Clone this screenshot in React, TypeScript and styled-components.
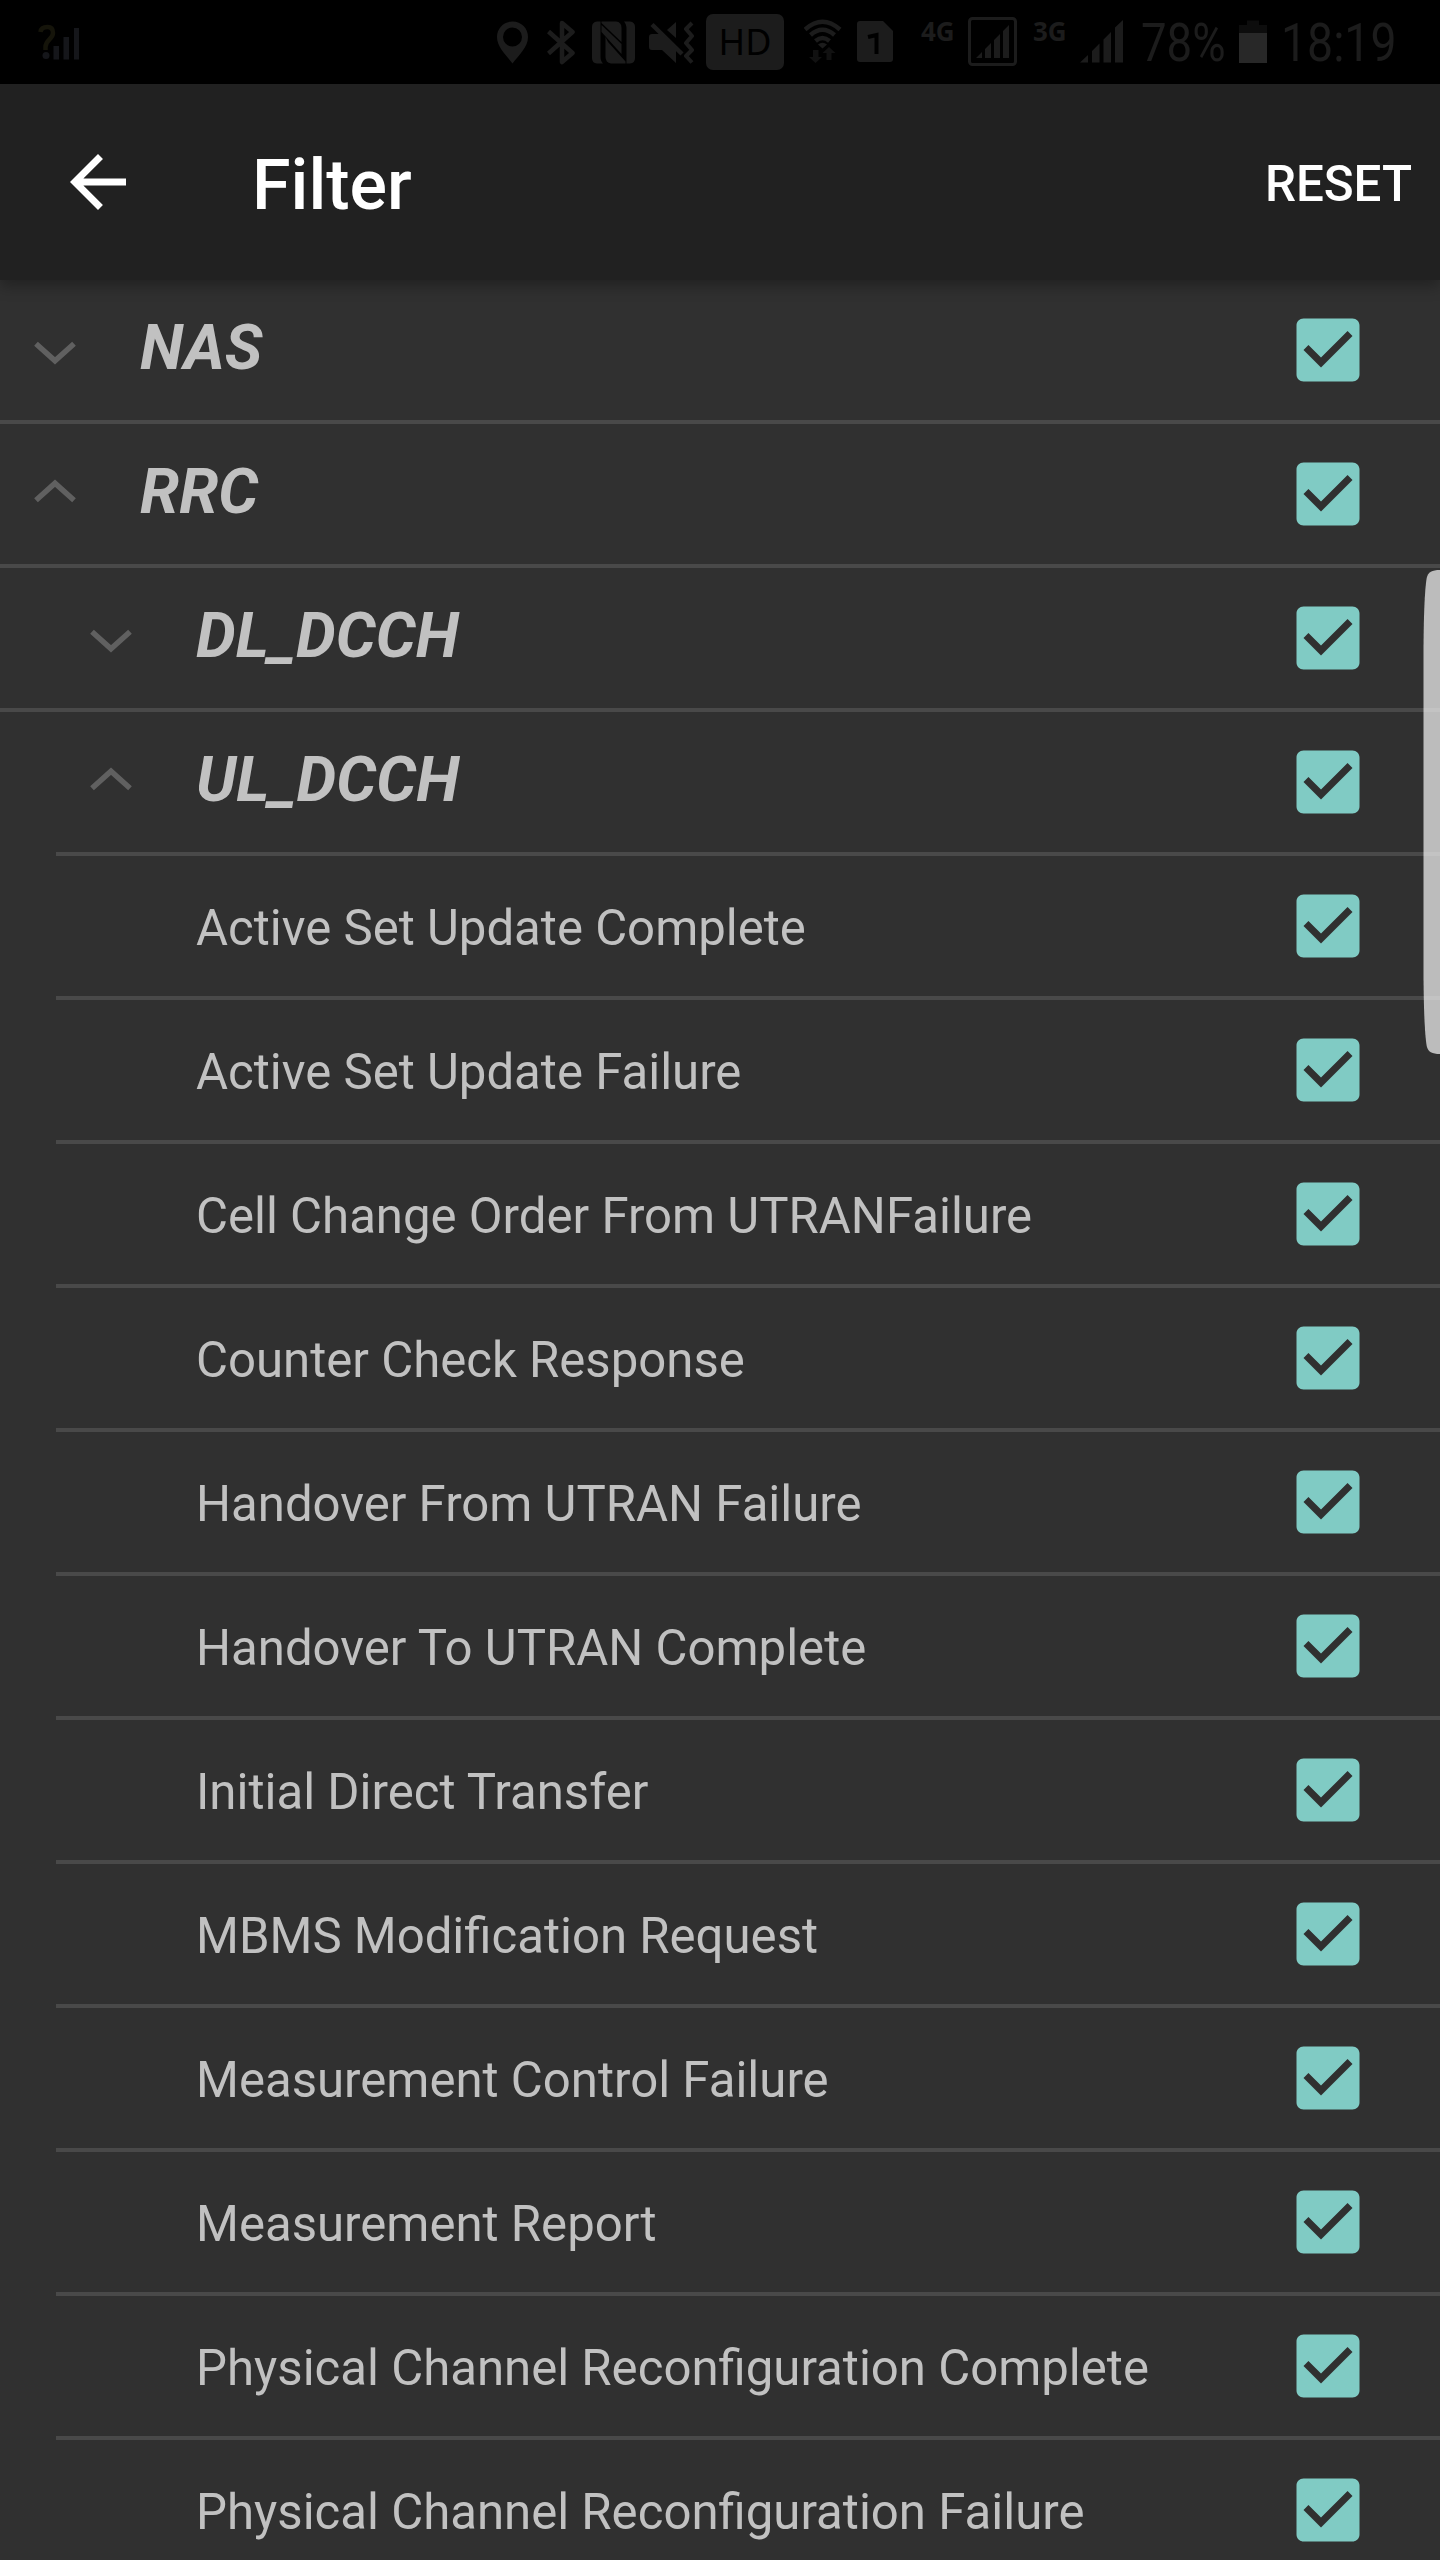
import React from "react";
import styled, { createGlobalStyle } from "styled-components";

const GlobalStyle = createGlobalStyle`
  * { box-sizing: border-box; }
  html, body { margin: 0; padding: 0; background: #303030; }
  body { overflow: hidden; font-family: Roboto, "Liberation Sans", sans-serif; }
`;

const INK = "#1c1c1c";

const Screen = styled.div`
  position: relative;
  width: 1440px;
  height: 2560px;
  overflow: hidden;
  display: flex;
  flex-direction: column;
  background: #303030;
`;

const StatusBar = styled.header`
  display: flex;
  flex: none;
  height: 84px;
  padding-left: 37px;
  background: #000;
  color: ${INK};
`;

const StatusIcon = styled.svg<{ $gap?: number }>`
  display: block;
  flex: none;
  margin-left: ${(p) => p.$gap ?? 0}px;
`;

const HdBadge = styled.span`
  display: flex;
  flex: none;
  align-items: center;
  justify-content: center;
  width: 78px;
  height: 56px;
  margin: 14px 0 0 12px;
  border-radius: 7px;
  background: ${INK};
  color: #000;
  font: 400 36px/56px "Noto Sans", sans-serif;
`;

const NetworkType = styled.span<{ $gap: number; $width: number }>`
  flex: none;
  width: ${(p) => p.$width}px;
  margin-left: ${(p) => p.$gap}px;
  padding-top: 13px;
  font: 700 26px/36px "Open Sans", sans-serif;
  white-space: nowrap;
`;

const StatusText = styled.span<{ $gap: number; $width: number; $scale: number }>`
  flex: none;
  width: ${(p) => p.$width}px;
  margin-left: ${(p) => p.$gap}px;
  font: 400 53px/86px Roboto, sans-serif;
  white-space: nowrap;
  transform: scaleX(${(p) => p.$scale});
  transform-origin: 0 50%;
`;

const Toolbar = styled.nav`
  position: relative;
  z-index: 1;
  display: flex;
  flex: none;
  align-items: center;
  height: 196px;
  padding: 0 28px 0 56px;
  background: #212121;
  box-shadow: 0 6px 14px rgba(0, 0, 0, 0.3);
`;

const BackIcon = styled.svg`
  display: block;
  width: 84px;
  height: 84px;
`;

const Title = styled.h1`
  flex: 1;
  margin: 0 0 0 112px;
  padding-top: 5px;
  color: #fff;
  font-size: 70px;
  line-height: 82px;
  font-weight: 500;
`;

const ResetButton = styled.button`
  padding: 4px 0 0;
  border: 0;
  background: none;
  color: #fff;
  font: 500 49.3px/58px Roboto, sans-serif;
`;

const List = styled.ul`
  display: flex;
  flex: none;
  flex-direction: column;
  margin: 0;
  padding: 0;
  list-style: none;
`;

const Row = styled.li<{ $inset: number }>`
  display: flex;
  flex-direction: column;
  height: 144px;

  &::after {
    content: "";
    height: 4px;
    margin-left: ${(p) => p.$inset}px;
    background: #494949;
  }
`;

const RowBody = styled.div<{ $level: number }>`
  display: flex;
  align-items: center;
  height: 140px;
  padding: 0 70px 0 ${(p) => p.$level * 56}px;
`;

const Indicator = styled.span`
  display: flex;
  flex: none;
  width: 140px;
  height: 140px;
`;

const GroupLabel = styled.span`
  flex: 1;
  margin-top: -4px;
  color: #c1c1c1;
  font-size: 63px;
  line-height: 74px;
  font-weight: 700;
  font-style: italic;
`;

const ItemLabel = styled.span`
  flex: 1;
  margin-top: 4px;
  color: #c1c1c1;
  font-size: 49.13px;
  line-height: 58px;
`;

const CheckIcon = styled.svg`
  display: block;
  flex: none;
  width: 84px;
  height: 84px;
`;

const ScrollThumb = styled.div`
  position: absolute;
  z-index: 2;
  top: 570px;
  right: 0;
  width: 17px;
  height: 484px;
  clip-path: path("M17 0C9 0 5 2 3.700 8C2 18 0.700 40 0.500 80V404C0.700 444 2 466 3.700 476C5 482 9 484 17 484Z");
  background: rgba(250, 250, 250, 0.69);
`;

const Checkbox = () => (
  <CheckIcon viewBox="0 0 24 24" role="img" aria-label="checked">
    <path
      fill="#80cbc4"
      d="M19 3H5c-1.11 0-2 .9-2 2v14c0 1.1.89 2 2 2h14c1.11 0 2-.9 2-2V5c0-1.1-.89-2-2-2zm-9 14l-5-5 1.41-1.41L10 14.17l7.59-7.59L19 8l-9 9z"
    />
  </CheckIcon>
);

const Chevron = ({ open }: { open: boolean }) => (
  <svg width="140" height="140" viewBox="0 0 140 140" fill="none" stroke="#606060" strokeWidth="5.500">
    <path d={open ? "M36 76.300L55 59.300L74 76.300" : "M36 63.700L55 80.700L74 63.700"} />
  </svg>
);

interface Entry {
  label: string;
  level: number;
  inset: number;
  open?: boolean;
}

const groups: Entry[] = [
  { label: "NAS", level: 0, inset: 0, open: false },
  { label: "RRC", level: 0, inset: 0, open: true },
  { label: "DL_DCCH", level: 1, inset: 0, open: false },
  { label: "UL_DCCH", level: 1, inset: 56, open: true },
];

const messages = [
  "Active Set Update Complete",
  "Active Set Update Failure",
  "Cell Change Order From UTRANFailure",
  "Counter Check Response",
  "Handover From UTRAN Failure",
  "Handover To UTRAN Complete",
  "Initial Direct Transfer",
  "MBMS Modification Request",
  "Measurement Control Failure",
  "Measurement Report",
  "Physical Channel Reconfiguration Complete",
  "Physical Channel Reconfiguration Failure",
];

const PhoneStatus = () => (
  <StatusBar>
    <StatusIcon width="43" height="84" viewBox="37 0 43 84">
      <path d="M40.5 32C41 27 45 27 47.500 27C51 27 53 29 53 33C53 39 45.500 40 45.500 47V50" fill="none" stroke="#15140a" strokeWidth="4.500" />
      <circle cx="46" cy="55.500" r="3.500" fill="#15161a" />
      <path d="M53.500 46h5.500v13.500h-5.500zM63.500 37h5.500v22.500h-5.500zM74 28h5v31.500h-5z" fill="#15161a" />
    </StatusIcon>
    <StatusIcon $gap={417} width="31" height="84" viewBox="497 0 31 84">
      <path fillRule="evenodd" fill={INK} d="M512.500 21.500C503.500 21.500 497 28.500 497 37C497 47 506 55 512.500 63.500C519 55 528 47 528 37C528 28.500 521.500 21.500 512.500 21.500zM512.500 27.500a9.500 9.500 0 1 1 0 19a9.500 9.500 0 1 1 0-19z" />
    </StatusIcon>
    <StatusIcon $gap={19} width="28" height="84" viewBox="547 0 28 84">
      <path fill="none" stroke={INK} strokeWidth="4.500" strokeLinejoin="round" d="M548.500 31.500L572.500 53L562 62V23L572.500 32L548.500 53.500" />
    </StatusIcon>
    <StatusIcon $gap={17} width="43" height="84" viewBox="592 0 43 84">
      <path fill={INK} d="M597 21.500H600.500V57C600.500 60 601.500 62 603 63.500H597Q592 63 592 58V27Q592 22 597 21.500z" />
      <path fill={INK} d="M601.500 21.500H616Q621.500 22 621.500 28V42L601.500 23z" />
      <path fill={INK} d="M608 42L625.500 61.500V63.500H611Q605.500 62.500 605.500 57V37z" />
      <path fill={INK} d="M624 21.500H630Q635 22 635 27V58Q635 63 630 63.500H626.500V29Q626.500 24 624 21.500z" />
      <path fill={INK} d="M601.500 25L621.500 44V54L601.500 32z" />
    </StatusIcon>
    <StatusIcon $gap={14} width="45" height="84" viewBox="649 0 45 84">
      <path fill={INK} d="M652 34h10l14 14v15l-14-13h-10q-3 0-3-3v-10q0-3 3-3zM667 30l9-8v16z" />
      <path fill="none" stroke={INK} strokeWidth="4.500" d="M652 24.500L682 54" />
      <path fill="none" stroke={INK} strokeWidth="4" strokeLinejoin="round" d="M692 23L686 29L692 36L686 43L692 50L686 56L692 62.500" />
    </StatusIcon>
    <HdBadge>HD</HdBadge>
    <StatusIcon $gap={20} width="39" height="84" viewBox="804 0 39 84">
      <g fill="none" stroke={INK} strokeWidth="4.500">
        <path d="M805 29.500Q822.500 14 840 29.500M810.500 35Q822.500 24.500 834.500 35M815.500 41Q822.500 35 829.500 41" />
      </g>
      <path fill={INK} d="M818 44.500q4.500-3.500 9 0l-4.500 4z" />
      <path fill="#111" d="M813 50h5.500v7h3.500l-6.500 6-6.500-6h4zM826.500 60v-7h-4l6.500-6 6.500 6h-4v7z" />
    </StatusIcon>
    <StatusIcon $gap={14} width="36" height="84" viewBox="857 0 36 84">
      <path fill={INK} d="M860 21h23l10 10v28q0 3-3 3h-30q-3 0-3-3v-35q0-3 3-3z" />
      <path fill="none" stroke="#000" strokeWidth="4" d="M876.500 54V35L868 37" />
    </StatusIcon>
    <NetworkType $gap={28} $width={47}>4G</NetworkType>
    <StatusIcon width="49" height="84" viewBox="968 0 49 84">
      <rect x="969.500" y="18.500" width="46" height="46" rx="3" fill="none" stroke={INK} strokeWidth="3" />
      <path fill={INK} d="M976 58l6-6v6zM985 49l6-6v15h-6zM994 40l6-6v24h-6zM1003 31l6-6v33h-6z" />
    </StatusIcon>
    <NetworkType $gap={16} $width={47}>3G</NetworkType>
    <StatusIcon width="43" height="84" viewBox="1080 0 43 84">
      <path fill={INK} d="M1080 62.500l8-7.500v7.500zM1092 51l7.500-7.500v19h-7.500zM1103.500 39.500l7.500-7.500v30.500h-7.500zM1115 27.500l8-7.500v42.500h-8z" />
    </StatusIcon>
    <StatusText $gap={18} $width={98} $scale={0.86}>78%</StatusText>
    <StatusIcon width="28" height="84" viewBox="1239 0 28 84">
      <path fill="#0d0d0d" d="M1239 25h8v-4.500h12v4.500h8v8h-28z" />
      <path fill="#282828" d="M1239 33h28v30h-28z" />
    </StatusIcon>
    <StatusText $gap={14} $width={130} $scale={0.875}>18:19</StatusText>
  </StatusBar>
);

export default function App() {
  return (
    <>
      <GlobalStyle />
      <Screen>
        <PhoneStatus />
        <Toolbar>
          <BackIcon viewBox="0 0 24 24">
            <path fill="#fff" d="M20 11H7.830l5.590-5.590L12 4l-8 8 8 8 1.410-1.410L7.830 13H20v-2z" />
          </BackIcon>
          <Title>Filter</Title>
          <ResetButton>RESET</ResetButton>
        </Toolbar>
        <List>
          {groups.map((g) => (
            <Row key={g.label} $inset={g.inset}>
              <RowBody $level={g.level}>
                <Indicator>
                  <Chevron open={!!g.open} />
                </Indicator>
                <GroupLabel>{g.label}</GroupLabel>
                <Checkbox />
              </RowBody>
            </Row>
          ))}
          {messages.map((m) => (
            <Row key={m} $inset={56}>
              <RowBody $level={3.5}>
                <ItemLabel>{m}</ItemLabel>
                <Checkbox />
              </RowBody>
            </Row>
          ))}
        </List>
        <ScrollThumb />
      </Screen>
    </>
  );
}
